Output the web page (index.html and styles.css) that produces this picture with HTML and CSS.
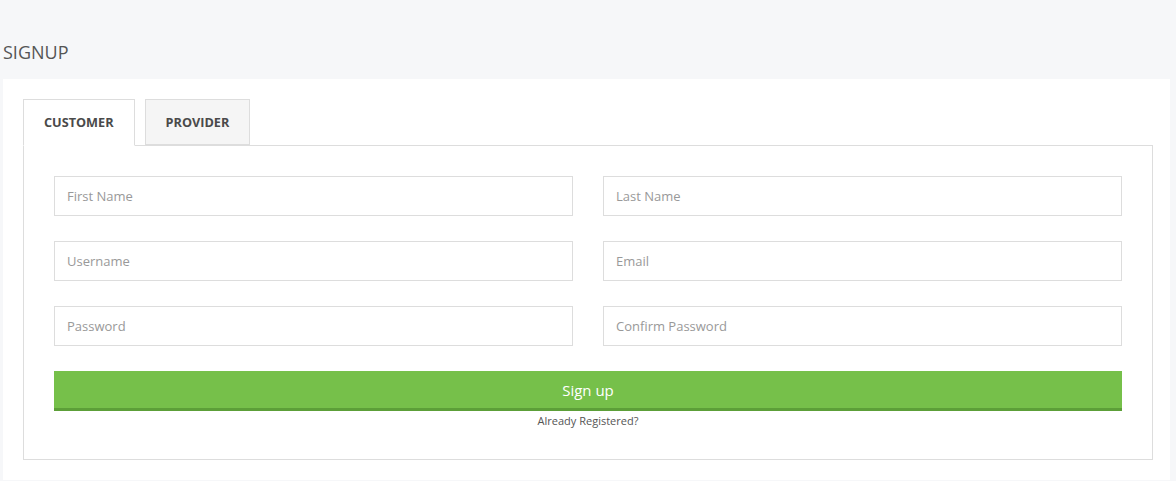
FILE: index.html
```html
<!DOCTYPE html>
<html>
<head>
<meta charset="utf-8">
<link rel="stylesheet" href="styles.css">
</head>
<body>
<div class="page">
  <h1 class="title">SIGNUP</h1>
  <div class="panel">
    <div class="tabs">
      <div class="tab active">CUSTOMER</div>
      <div class="tab">PROVIDER</div>
    </div>
    <div class="tab-box">
      <div class="grid">
        <div class="input">First Name</div>
        <div class="input">Last Name</div>
        <div class="input">Username</div>
        <div class="input">Email</div>
        <div class="input">Password</div>
        <div class="input">Confirm Password</div>
      </div>
      <div class="btn">Sign up</div>
      <div class="already">Already Registered?</div>
    </div>
  </div>
</div>
</body>
</html>
```

FILE: styles.css
```css
html, body {
  margin: 0;
  padding: 0;
  background: #f6f7f9;
  font-family: "Open Sans", "Liberation Sans", sans-serif;
}
.page {
  padding: 0 6px 0 3px;
}
.title {
  margin: 0;
  padding-top: 41px;
  height: 79px;
  box-sizing: border-box;
  font-size: 18px;
  font-weight: 400;
  line-height: 22px;
  color: #555;
}
.panel {
  background: #fff;
  padding: 20px 17px 20px 20px;
}
.tabs {
  display: flex;
  gap: 10px;
  height: 46px;
  position: relative;
  z-index: 1;
}
.tab {
  box-sizing: border-box;
  height: 47px;
  padding: 0 20px;
  border: 1px solid #ddd;
  background: #f5f5f5;
  font-size: 12.7px;
  font-weight: 700;
  color: #4a4a4a;
  line-height: 45px;
}
.tab.active {
  background: #fff;
  border-bottom-color: #fff;
}
.tab:not(.active) {
  height: 46px;
  line-height: 44px;
}
.tab-box {
  border: 1px solid #ddd;
  padding: 30px;
  height: 315px;
  box-sizing: border-box;
}
.grid {
  display: grid;
  grid-template-columns: 1fr 1fr;
  column-gap: 30px;
  row-gap: 25px;
}
.input {
  box-sizing: border-box;
  height: 40px;
  border: 1px solid #ddd;
  padding: 0 12px;
  font-size: 13px;
  line-height: 38px;
  color: #999;
}
.btn {
  margin-top: 25px;
  box-sizing: border-box;
  height: 40px;
  background: #76c04a;
  border-bottom: 3px solid #5c9f38;
  color: #fff;
  text-align: center;
  font-size: 15px;
  line-height: 38px;
}
.already {
  text-align: center;
  font-size: 11px;
  color: #555;
  margin-top: 2px;
  line-height: 16px;
}
```
